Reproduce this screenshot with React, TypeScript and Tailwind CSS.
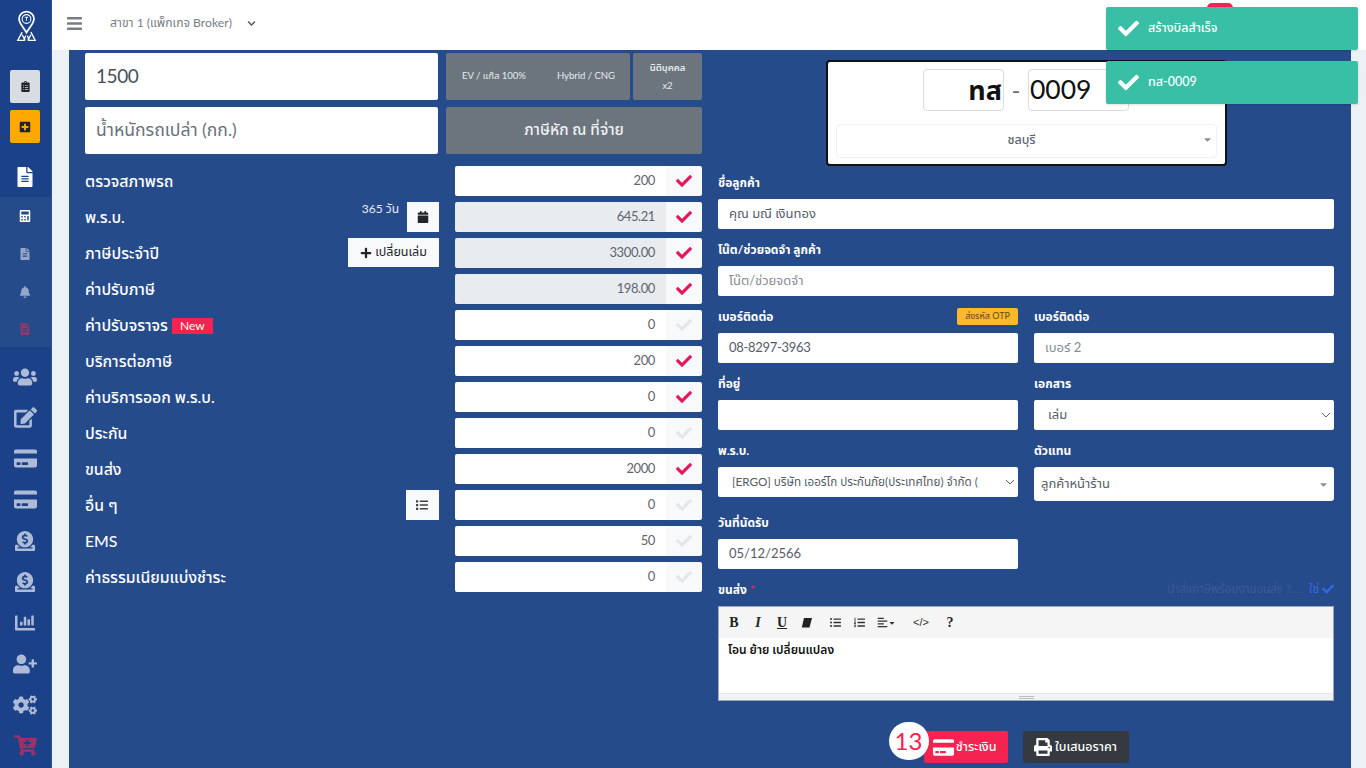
import React from "react";
import {
  FaBars, FaBell, FaCalculator, FaCalendar, FaCartPlus, FaCheck, FaChevronDown, FaClipboardList, FaCogs, FaCreditCard, FaDonate, FaEdit, FaFileAlt, FaChartBar, FaList, FaPlus, FaPlusSquare, FaPrint, FaUserPlus, FaUsers, FaListUl, FaListOl, FaAlignLeft, FaCaretDown,
} from "react-icons/fa";

const font = { fontFamily: '"Lato","Noto Sans","Noto Sans Thai","Liberation Sans",sans-serif' };

function Logo() {
  return (
    <svg width="21" height="32" viewBox="0 0 24 36" fill="none" stroke="#fff" className="ml-[3px]">
      <path d="M12 1.500C6.800 1.500 3.500 5.500 3.500 10c0 5 5 9.500 8.500 15.500C15.500 19.500 20.500 15 20.500 10c0-4.500-3.300-8.500-8.500-8.500Z" strokeWidth="2" />
      <circle cx="12" cy="10" r="5" strokeWidth="1.200" />
      <path d="M10 8h4M12 8v4" strokeWidth="1" />
      <path d="M7 25 2 34.500h7L11 29M17 25l5 9.500h-7L13 29M7 28l3.500 6.500M17 28l-3.500 6.500" strokeWidth="1.500" />
    </svg>
  );
}

function Sidebar() {
  const lower = [
    <FaUsers size={24} />, <FaEdit size={23} />, <FaCreditCard size={23} />, <FaCreditCard size={23} />, <FaDonate size={20} />, <FaDonate size={20} />, <FaChartBar size={20} />, <FaUserPlus size={24} />, <FaCogs size={24} />,
  ];
  return (
    <aside className="w-[52px] shrink-0 h-full bg-[#1b4289] flex flex-col items-center pr-[1px] border-r border-[#2b5296]">
      <div className="h-[50px] w-full flex items-center justify-center pt-[1px] shrink-0"><Logo /></div>
      <div className="mt-[20px] w-[30px] h-[33px] rounded-[2px] bg-[#d9dde3] flex items-center justify-center text-[#212529] text-[11px]"><FaClipboardList /></div>
      <div className="mt-[7px] w-[30px] h-[33px] rounded-[2px] bg-[#ffa800] flex items-center justify-center text-[#212529] text-[12px]"><FaPlusSquare /></div>
      <div className="h-[54px] w-full flex items-center justify-center pt-[14px] text-white text-[20px] shrink-0"><FaFileAlt /></div>
      <div className="w-[51px] self-start h-[150px] pr-[1px] bg-[#264b8b] flex flex-col shrink-0">
        <div className="h-[38px] flex items-center justify-center text-white text-[12px]"><FaCalculator /></div>
        <div className="h-[38px] flex items-center justify-center text-[#93a5c8] text-[12px]"><FaFileAlt /></div>
        <div className="h-[38px] flex items-center justify-center text-[#93a5c8] text-[12px]"><FaBell /></div>
        <div className="h-[36px] flex items-center justify-center text-[#8c3a6b] text-[12px]"><FaFileAlt /></div>
      </div>
      <div className="w-full flex flex-col text-[#aebbd8] pt-[9px]">
        {lower.map((icon, i) => (
          <div key={i} className="h-[41px] flex items-center justify-center">{icon}</div>
        ))}
        <div className="h-[41px] flex items-center justify-center text-[#a02e68]"><FaCartPlus size={23} /></div>
      </div>
    </aside>
  );
}

function Check({ on }: { on: boolean }) {
  return (
    <span className="w-[36px] shrink-0 h-full bg-[#f8f9fa] flex items-center justify-center text-[16px]">
      <FaCheck className={on ? "text-[#e3175f]" : "text-[#e4e6e9]"} />
    </span>
  );
}

function Row({ label, value, on, disabled, children }: { label: React.ReactNode; value: string; on: boolean; disabled?: boolean; children?: React.ReactNode }) {
  return (
    <div className="flex h-[30px] mb-[6px] items-center">
      <div className="w-[354px] flex items-center justify-between text-white text-[15.800px] font-medium">
        <span className="flex items-center gap-[4px] whitespace-nowrap">{label}</span>
        {children}
      </div>
      <div className="ml-[16px] w-[247px] h-[30px] flex rounded-[2px] overflow-hidden">
        <div className={`flex-1 flex items-center justify-end pr-[11px] text-[13px] tracking-[-0.4px] text-[#5f6670] ${disabled ? "bg-[#e9ecef]" : "bg-white"}`}>{value}</div>
        <Check on={on} />
      </div>
    </div>
  );
}

function Field({ label, children, right }: { label: React.ReactNode; children: React.ReactNode; right?: React.ReactNode }) {
  return (
    <div className="mb-[10px]">
      <div className="h-[20px] mb-[7px] flex items-center justify-between text-white text-[12px] font-bold whitespace-nowrap">
        <span className="pt-[2px]">{label}</span>
        {right}
      </div>
      {children}
    </div>
  );
}

function Box({ children, muted, small, className = "" }: { children?: React.ReactNode; muted?: boolean; small?: boolean; className?: string }) {
  return (
    <div className={`h-[30px] bg-white rounded-[2px] flex items-center justify-between px-[11px] ${small ? "text-[11.700px]" : "text-[13px]"} whitespace-nowrap overflow-hidden ${muted ? "text-[#858b93]" : "text-[#555c66]"} ${className}`}>
      {children}
    </div>
  );
}

function Chevron() {
  return (
    <svg width="10" height="6" viewBox="0 0 10 6" fill="none" stroke="#5f6670" strokeWidth="1"><path d="M1 1l4 4 4-4" /></svg>
  );
}

function Caret() {
  return <span className="text-[#8b8f96] text-[11px]"><FaCaretDown /></span>;
}

const rows: { label: React.ReactNode; value: string; on: boolean; disabled?: boolean; extra?: React.ReactNode }[] = [
  { label: "ตรวจสภาพรถ", value: "200", on: true },
  {
    label: "พ.ร.บ.", value: "645.21", on: true, disabled: true,
    extra: (
      <span className="flex items-start h-[30px] text-[12px] font-normal">
        <span className="mr-[8px] mt-[-2px] text-[#e6ebf5]">365 วัน</span>
        <span className="w-[32px] h-[30px] bg-[#f8f9fa] flex items-center justify-center text-[#212529] text-[12px]"><FaCalendar /></span>
      </span>
    ),
  },
  {
    label: "ภาษีประจำปี", value: "3300.00", on: true, disabled: true,
    extra: (
      <span className="w-[91px] h-[29px] mb-[1px] bg-[#f8f9fa] flex items-center justify-center gap-[3px] text-[#212529] text-[12.500px] font-normal"><FaPlus className="text-[12px]" />เปลี่ยนเล่ม</span>
    ),
  },
  { label: "ค่าปรับภาษี", value: "198.00", on: true, disabled: true },
  {
    label: (
      <>
        ค่าปรับจราจร
        <span className="bg-[#f5234f] text-white text-[12px] font-normal px-[8px] h-[16px] flex items-center rounded-[1px] mt-[1px]">New</span>
      </>
    ),
    value: "0", on: false,
  },
  { label: "บริการต่อภาษี", value: "200", on: true },
  { label: "ค่าบริการออก พ.ร.บ.", value: "0", on: true },
  { label: "ประกัน", value: "0", on: false },
  { label: "ขนส่ง", value: "2000", on: true },
  {
    label: "อื่น ๆ", value: "0", on: false,
    extra: <span className="w-[33px] h-[30px] bg-[#f8f9fa] flex items-center justify-center pr-[1px] text-[#3b4148] text-[12px]"><FaList /></span>,
  },
  { label: "EMS", value: "50", on: false },
  { label: "ค่าธรรมเนียมแบ่งชำระ", value: "0", on: false },
];

function LeftColumn() {
  return (
    <div className="w-[617px] shrink-0">
      <div className="grid grid-cols-[353px_256px] gap-x-[8px] gap-y-[7px]">
        <div className="h-[47px] bg-white rounded-[2px] flex items-center px-[11px] pb-[1px] text-[19px] tracking-[-0.400px] text-[#49505a]">1500</div>
        <div className="h-[47px] flex gap-[3px] text-[#e8eaed]">
          <div className="w-[184px] bg-[#6c757d] rounded-[2px] flex items-center text-[9.500px]">
            <span className="w-[96px] text-center">EV / แก๊ส 100%</span>
            <span className="flex-1 text-center">Hybrid / CNG</span>
          </div>
          <div className="flex-1 bg-[#6c757d] rounded-[2px] flex flex-col items-center justify-center text-[9.500px] leading-[18px]">
            <span className="font-semibold">นิติบุคคล</span>
            <span>x2</span>
          </div>
        </div>
        <div className="h-[47px] bg-white rounded-[2px] flex items-center px-[11px] pb-[1px] text-[17.600px] text-[#6a717a]">น้ำหนักรถเปล่า (กก.)</div>
        <div className="h-[47px] bg-[#6c757d] rounded-[2px] flex items-center justify-center pb-[2px] text-[15.400px] font-medium text-[#f0f1f3]">ภาษีหัก ณ ที่จ่าย</div>
      </div>
      <div className="mt-[12px]">
        {rows.map((r, i) => (
          <Row key={i} label={r.label} value={r.value} on={r.on} disabled={r.disabled}>{r.extra}</Row>
        ))}
      </div>
    </div>
  );
}

function PlateCard() {
  return (
    <div className="ml-[108px] mt-[7px] w-[401px] h-[106px] bg-white border-2 border-[#111] rounded-[4px] pt-[7px] px-[8px]">
      <div className="flex items-center justify-center h-[42px] pr-[1px]">
        <div className="w-[81px] h-[42px] border border-[#dcdcdc] rounded-[4px] flex items-center justify-end text-[27px] font-bold text-[#111] pr-[1px]">ทส</div>
        <span className="w-[24px] text-center text-[24px] text-[#667085]">-</span>
        <div className="w-[101px] h-[42px] border border-[#dcdcdc] rounded-[4px] flex items-center pl-[1px] text-[26.500px] text-[#111]">0009</div>
      </div>
      <div className="mt-[13px] h-[34px] border border-[#f1f1f1] rounded-[4px] flex items-center justify-center relative pr-[10px] pb-[1px] text-[12.500px] font-medium text-[#5b6470]">
        ชลบุรี
        <span className="absolute right-[3px] top-[9px]"><Caret /></span>
      </div>
    </div>
  );
}

function Editor() {
  const icon = "w-[24px] flex items-center justify-center";
  return (
    <div className="h-[95px] bg-white border border-[#9aa7bf]">
      <div className="h-[31px] bg-[#f5f5f5] flex items-center pl-[3px] text-[#333] text-[11px]">
        <span className={`${icon} font-bold text-[14px] text-[#222]`} style={{ fontFamily: '"Liberation Serif",serif' }}>B</span>
        <span className={`${icon} italic font-bold text-[14px] text-[#222]`} style={{ fontFamily: '"Liberation Serif",serif' }}>I</span>
        <span className={`${icon} underline font-bold text-[14px] text-[#222]`} style={{ fontFamily: '"Liberation Serif",serif' }}>U</span>
        <span className={icon}>
          <svg width="11" height="10" viewBox="0 0 11 10" fill="#222"><path d="M3 0h8L8.500 9.500H.8Z" /></svg>
        </span>
        <span className="w-[5px]" />
        <span className={icon}><FaListUl /></span>
        <span className={icon}><FaListOl /></span>
        <span className="w-[30px] flex items-center justify-center"><FaAlignLeft /><FaCaretDown className="text-[8px]" /></span>
        <span className="w-[8px]" />
        <span className={`${icon} text-[11px]`} style={{ fontFamily: '"Liberation Sans",sans-serif' }}>&lt;/&gt;</span>
        <span className="w-[5px]" />
        <span className={`${icon} font-bold text-[14px] text-[#222]`} style={{ fontFamily: '"Liberation Serif",serif' }}>?</span>
      </div>
      <div className="h-[55px] px-[9px] pt-[3px] text-[12px] font-semibold text-[#111]">โอน ย้าย เปลี่ยนแปลง</div>
      <div className="h-[7px] bg-[#f3f3f3] flex items-center justify-center border-t border-[#e9e9e9]"><span className="w-[15px] h-[3px] border-y border-[#bdbdbd]" /></div>
    </div>
  );
}

function RightColumn() {
  return (
    <div className="w-[616px] shrink-0 ml-[16px]">
      <PlateCard />
      <div className="mt-[6px]">
        <Field label="ชื่อลูกค้า"><Box>คุณ มณี เงินทอง</Box></Field>
        <Field label="โน๊ต/ช่วยจดจำ ลูกค้า"><Box muted>โน๊ต/ช่วยจดจำ</Box></Field>
        <div className="grid grid-cols-2 gap-x-[16px]">
          <Field
            label="เบอร์ติดต่อ"
            right={<span className="w-[61px] h-[17px] bg-[#fbb829] rounded-[2px] flex items-center justify-center text-[9px] font-normal text-[#5f4a17]">ส่งรหัส OTP</span>}
          >
            <Box className="tracking-[-0.300px]">08-8297-3963</Box>
          </Field>
          <Field label="เบอร์ติดต่อ"><Box muted>เบอร์ 2</Box></Field>
          <Field label="ที่อยู่"><Box /></Field>
          <Field label="เอกสาร"><Box className="pl-[14px] pr-[3px]">เล่ม<Chevron /></Box></Field>
          <Field label="พ.ร.บ.">
            <Box small className="pl-[14px] pr-[3px]"><span>[ERGO] บริษัท เออร์โก ประกันภัย(ประเทศไทย) จำกัด (</span><span className="shrink-0 ml-[6px]"><Chevron /></span></Box>
          </Field>
          <div className="mb-[11px]">
            <div className="h-[20px] mb-[7px] flex items-center text-white text-[12px] font-bold"><span className="pt-[2px]">ตัวแทน</span></div>
            <div className="h-[34px] bg-white rounded-[3px] flex items-center justify-between pl-[7px] pr-[5px] text-[13px] text-[#555c66]">ลูกค้าหน้าร้าน<Caret /></div>
          </div>
          <Field label="วันที่นัดรับ"><Box>05/12/2566</Box></Field>
          <div />
        </div>
        <div className="h-[20px] mb-[7px] flex items-center justify-between text-white text-[12px] font-bold whitespace-nowrap">
          <span className="pt-[2px]">ขนส่ง <span className="text-[#e3175f]">*</span></span>
          <span className="flex items-center gap-[3px]">
            <span className="text-[#3b5a95] font-normal text-[11.600px] mr-[4px]">นำส่งภาษีพร้อมงานขนส่ง ?....</span>
            <span className="text-[#2f6be4] font-normal">ใช่</span>
            <FaCheck className="text-[#2f6be4] text-[12px]" />
          </span>
        </div>
        <Editor />
        <div className="mt-[30px] flex justify-center gap-[15px]">
          <div className="relative w-[84px] h-[32px] bg-[#f5234f] rounded-[2px] flex items-center justify-end pr-[11px] gap-[2px] text-white text-[12.500px] font-medium">
            <span className="absolute left-[-35px] top-[-9px] w-[40px] h-[38px] rounded-full bg-white flex items-center justify-center text-[#f5234f] text-[24px] font-normal">13</span>
            <FaCreditCard className="text-[21px]" />ชำระเงิน
          </div>
          <div className="w-[106px] h-[32px] bg-[#343a40] rounded-[2px] flex items-center justify-center gap-[3px] text-white text-[12.500px] font-medium">
            <FaPrint className="text-[18px]" />ใบเสนอราคา
          </div>
        </div>
      </div>
    </div>
  );
}

function Toast({ text }: { text: string }) {
  return (
    <div className="w-[252px] h-[43px] bg-[#38bfa6] rounded-[2px] flex items-center pl-[12px] gap-[9px] text-white text-[12.500px] font-medium shadow-sm">
      <FaCheck className="text-[21px]" />{text}
    </div>
  );
}

export default function App() {
  return (
    <div style={font} className="relative flex w-screen h-screen overflow-hidden bg-[#ebf1f4]">
      <Sidebar />
      <div className="flex-1 min-w-0 flex flex-col h-full">
        <header className="h-[50px] shrink-0 bg-white flex items-center pl-[14px] pb-[4px] text-[#777d85] relative">
          <FaBars className="text-[17px] w-[17px]" />
          <span className="ml-[27px] text-[12.200px]">สาขา 1 (แพ็กเกจ Broker)</span>
          <FaChevronDown className="ml-[15px] text-[9px] text-[#555]" />
          <span className="absolute left-[1155px] top-[3px] w-[26px] h-[10px] rounded-full bg-[#f5234f]" />
        </header>
        <main className="flex-1 min-h-0 ml-[17px] mr-[15px] bg-[#264b8b] flex pl-[16px] pt-[3px] overflow-hidden">
          <LeftColumn />
          <RightColumn />
        </main>
      </div>
      <div className="absolute left-[1106px] top-[7px] flex flex-col gap-[11px]">
        <Toast text="สร้างบิลสำเร็จ" />
        <Toast text="ทส-0009" />
      </div>
    </div>
  );
}
